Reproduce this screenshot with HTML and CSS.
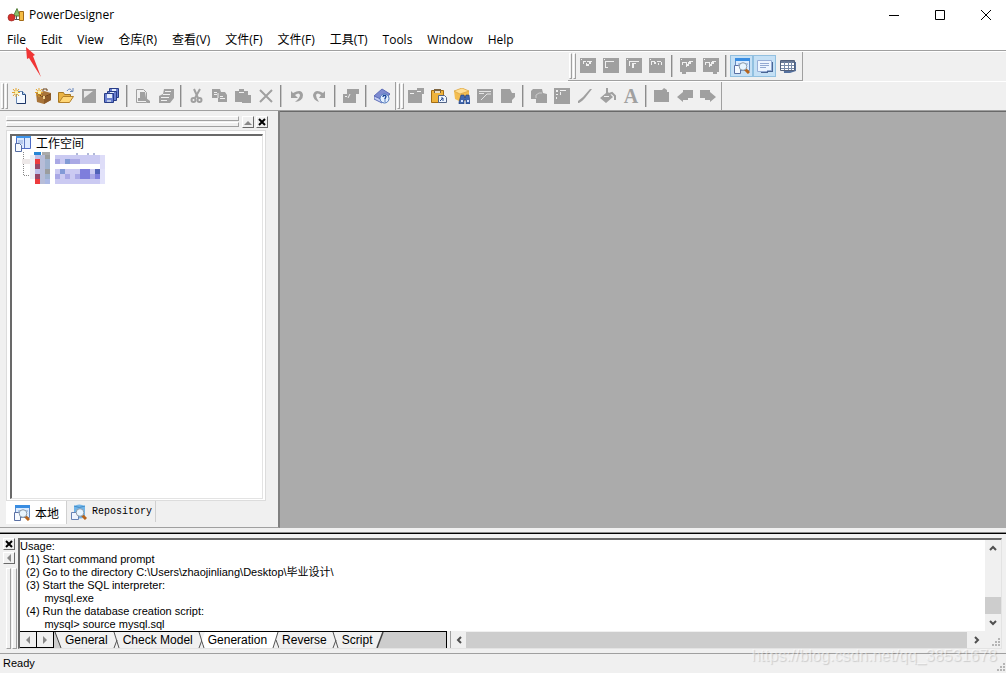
FILE: index.html
```html
<!DOCTYPE html>
<html lang="zh-CN">
<head>
  <meta charset="UTF-8" />
  <meta name="viewport" content="width=device-width, initial-scale=1" />
  <title>PowerDesigner</title>
  <link rel="stylesheet" href="styles.css">
</head>
<body>

  <header class="titlebar">
    <svg class="logo" width="18" height="16" viewBox="0 0 18 16">
      <path d="M6.500 9l3.500-7.500L13 9z" fill="#8cc06a" stroke="#56803c"/>
      <path d="M12.500 4.500h4v9h-4z" fill="#f5bd45" stroke="#a36a17"/>
      <path d="M9.500 9v3M8 12.500h4" stroke="#555" fill="none"/>
      <circle cx="4.500" cy="10.500" r="3.500" fill="#d8322c" stroke="#8c1e1a" stroke-width=".6"/>
    </svg>
    <span class="app-name">PowerDesigner</span>
    <div class="window-buttons">
      <button type="button" aria-label="Minimize"><svg width="12" height="12"><path d="M1 6.500h10" stroke="#000"/></svg></button>
      <button type="button" aria-label="Maximize"><svg width="12" height="12"><path d="M1.500 1.500h9v9h-9z" stroke="#000" fill="none"/></svg></button>
      <button type="button" aria-label="Close"><svg width="12" height="12"><path d="M1 1l10 10M11 1L1 11" stroke="#000"/></svg></button>
    </div>
  </header>

  <nav class="menubar">
    <a href="#">File</a>
    <a href="#">Edit</a>
    <a href="#">View</a>
    <a href="#">仓库(R)</a>
    <a href="#">查看(V)</a>
    <a href="#">文件(F)</a>
    <a href="#">文件(F)</a>
    <a href="#">工具(T)</a>
    <a href="#">Tools</a>
    <a href="#">Window</a>
    <a href="#">Help</a>
  </nav>

  <div class="toolbars">
    <div class="toolbar-row">
      <div class="toolbar diagram-bar">
        <span class="grip"></span>
        <button type="button" aria-label="Diagram 1"><svg viewBox="0 0 16 16"><path class="off" d="M0 0h16v15H0z"/><path class="hole" d="M1 1h1v1H1zM3 3h3v1H3zM3 3h1v3H3zM7 3h5v1H7zM9 4h2v2H9zM7 6h2v2H7zM6 5h1v3H6z"/></svg></button>
        <button type="button" aria-label="Diagram 2"><svg viewBox="0 0 16 16"><path class="off" d="M0 0h16v15H0z"/><path class="hole" d="M1 1h1v1H1zM2 3h9v1H2zM2 4h1v6H2zM3 9h2v1H3z"/></svg></button>
        <button type="button" aria-label="Diagram 3"><svg viewBox="0 0 16 16"><path class="off" d="M0 0h16v15H0z"/><path class="hole" d="M1 1h1v1H1zM3 3h10v1H3zM3 4h1v4H3zM6 5h4v1H6zM6 5h2v5H6z"/></svg></button>
        <button type="button" aria-label="Diagram 4"><svg viewBox="0 0 16 16"><path class="off" d="M0 0h16v15H0z"/><path class="hole" d="M1 1h1v1H1zM2 3h4v1H2zM2 4h1v3H2zM5 4h2v2H5zM8 3h4v1H8zM9 5h1v2H9zM12 4h1v3h-1z"/></svg></button>
        <span class="sep"></span>
        <button type="button" aria-label="Check"><svg viewBox="0 0 16 16"><path class="off" d="M0 0h16v14H6v2H2v-2H0z"/><path class="hole" d="M1 1h1v1H1zM2 4h5v1H2zM2 5h1v2H2zM6 5h1v4H6zM9 3h4v1H9zM8 4h3v2H8zM7 6h2v2H7z"/></svg></button>
        <button type="button" aria-label="Find"><svg viewBox="0 0 16 16"><path class="off" d="M0 0h16v14h-2v2h-4v-2H0z"/><path class="hole" d="M1 1h1v1H1zM2 4h5v1H2zM2 5h1v2H2zM6 5h1v4H6zM9 3h4v1H9zM8 4h3v2H8zM7 6h2v2H7z"/></svg></button>
        <span class="sep"></span>
        <button type="button" class="pressed" aria-label="Browser" aria-pressed="true"><svg viewBox="0 0 16 16"><use href="#browser-icon"/></svg></button>
        <button type="button" class="pressed" aria-label="Output" aria-pressed="true"><svg viewBox="0 0 16 16"><path d="M3 4h13v10h-5v1H4z" fill="#4a6594"/><path d="M.500 2.500h14v10h-4l-1 1h-9z" fill="#eef5ff" stroke="#98aed6"/><path d="M3 5.500h9M3 7.500h9M3 9.500h6" stroke="#93a9d2"/></svg></button>
        <button type="button" aria-label="Result List"><svg viewBox="0 0 16 16"><path d="M3 4h13v9l-6 2H4z" fill="#55719f"/><path d="M.500 2.500h14v10H.500z" fill="#fff" stroke="#53617c"/><path d="M1 4h13" stroke="#697996" stroke-width="2"/><path d="M1 7.500h13M1 10.500h13M4.500 4v8M8.500 4v8M11.500 4v8" stroke="#788aa8"/></svg></button>
      </div>
    </div>

    <div class="toolbar-row">
      <div class="toolbar">
        <span class="grip"></span>
        <button type="button" aria-label="New Model"><svg viewBox="0 0 16 16"><path d="M4.500 3.500h6l3 3v9h-9z" fill="#f4f9ff" stroke="#6a8ab5"/><path d="M5 15.500h8.500V7" fill="none" stroke="#1d3566"/><path d="M10.500 3.500v3h3" fill="#b9d3ef" stroke="#31578d"/><use href="#spark"/></svg></button>
        <button type="button" aria-label="New Project"><svg viewBox="0 0 16 16"><path d="M1 5l8-2 7 2v7l-7 4-7-2z" fill="#a87439"/><path d="M2 6l7 3 7-3" stroke="#694019" fill="none"/><path d="M9 10v6l7-4V6z" fill="#8c5a28"/><path d="M8 3V1h4v2" fill="none" stroke="#694019"/><path d="M8 8h2v3H8z" fill="#f0d08c"/><use href="#spark"/></svg></button>
        <button type="button" aria-label="Open"><svg viewBox="0 0 16 16"><path d="M.500 14.500v-10h5l1 2h6v3" fill="#eab344" stroke="#a77720"/><path d="M1 14.500l4-6h10.500l-4 6z" fill="#ffd675" stroke="#b5812a"/><path d="M9 3c2-3 4-2 5 0M12 3.500h3V0" fill="none" stroke="#6684ba"/></svg></button>
        <button type="button" aria-label="Save"><svg viewBox="0 0 16 16"><path class="off" d="M1 1h14v14H1z"/><path d="M3 3h9L3 10z" fill="#e8e8e8"/></svg></button>
        <button type="button" aria-label="Save All"><svg viewBox="0 0 16 16"><g fill="#6a7fd0" stroke="#273c87"><path d="M5.500 .500h9v9h-9z"/><path d="M3.500 3.500h9v9h-9z"/><path d="M.500 5.500h9v9h-9z"/></g><path d="M3 6h5v4H3zM8 1h4v2H8zM6 4h4v1H6z" fill="#e5edfc"/><path d="M3 12h4v2H3z" fill="#b9c8e7"/></svg></button>
        <span class="sep"></span>
        <button type="button" aria-label="Print Preview"><svg viewBox="0 0 16 16"><path d="M1.500 1.500h7l3 3v10h-10z" fill="none" stroke="#a0a0a0" stroke-width="1"/><path class="off" d="M5 4h5l1 6 4 3v2h-3l-1-2H3v-3h2z"/></svg></button>
        <button type="button" aria-label="Print"><svg viewBox="0 0 16 16"><path class="off" d="M6 1h10v9l-4 5H1V8l4-2z"/><path class="cut" d="M7 3.500h6M5 6.500h7M3 9.500h8M3 12.500h6"/></svg></button>
        <span class="sep"></span>
        <button type="button" aria-label="Cut"><svg viewBox="0 0 16 16"><path d="M5 1l4 9M11 1L6 10" stroke="#a0a0a0" stroke-width="2"/><g fill="none" stroke="#a0a0a0" stroke-width="2"><circle cx="4.500" cy="12" r="2"/><circle cx="10.500" cy="12" r="2"/></g></svg></button>
        <button type="button" aria-label="Copy"><svg viewBox="0 0 16 16"><path class="off" d="M0 1h8l1 3h4l2 3v7H6v-4H0z"/><path class="cut" d="M2 4.500h3M2 6.500h3M8 8.500h3M8 10.500h5M6 5v5"/></svg></button>
        <button type="button" aria-label="Paste"><svg viewBox="0 0 16 16"><path class="off" d="M0 3h4V1h5v2h4v4h3v8H7v-1H0z"/><path class="cut" d="M4 4.500h5"/></svg></button>
        <button type="button" aria-label="Delete"><svg viewBox="0 0 16 16"><path d="M2 2l12 12M14 2L2 14" stroke="#a0a0a0" stroke-width="2"/></svg></button>
        <span class="sep"></span>
        <button type="button" aria-label="Undo"><svg viewBox="0 0 16 16"><path class="off" d="M2 3v7h7L6 7q4-3 5 0 0 3-5 7 8-1 8-7Q13 0 4 5z"/></svg></button>
        <button type="button" aria-label="Redo"><svg viewBox="0 0 16 16"><path class="off" d="M13 3v7H7l2-3Q5 4 4 7q0 3 3 7-6-2-6-7Q3 0 11 5z"/></svg></button>
        <span class="sep"></span>
        <button type="button" aria-label="Properties"><svg viewBox="0 0 16 16"><path class="off" d="M4 1h12v5h-3v9H0V6h4z"/><path class="cut" d="M2 8.500h2M7 6l-2 4"/></svg></button>
        <span class="sep"></span>
        <button type="button" aria-label="Help"><svg viewBox="0 0 16 16"><path d="M0 8l8-7 8 5-7 7z" fill="#7d8bd1" stroke="#5f6db8"/><path d="M0 8v3l8 4 8-9-7 6z" fill="#c4d0f4" stroke="#5f6db8"/><circle cx="10.500" cy="10.500" r="4.500" fill="#e4f0ff" stroke="#4a75b9"/><path d="M9 9q0-2 2-1.500t0 3v1M11 12.500v1" fill="none" stroke="#174398" stroke-width="1.300"/></svg></button>
      </div>

      <div class="toolbar">
        <span class="grip"></span>
        <button type="button" aria-label="Find Objects"><svg viewBox="0 0 16 16"><path class="off" d="M0 2h9V0h7v6h-2v9H0z"/><path class="cut" d="M2 5.500h4M9 3.500h4"/></svg></button>
        <button type="button" aria-label="Paste Shortcut"><svg viewBox="0 0 16 16"><path d="M.500 2.500h12v12H.500z" fill="#efb33c" stroke="#a46d13"/><path d="M3 1h7v4H3z" fill="#7d643f"/><path d="M4 3h5v2H4z" fill="#e9ddc5"/><path d="M7.500 7.500h6l2 2v5h-8z" fill="#eef5ff" stroke="#536485"/><path d="M9 13l3-3h-2M12 10v3" fill="none" stroke="#254a8e"/></svg></button>
        <button type="button" aria-label="Find in Folder"><svg viewBox="0 0 16 16"><path d="M0 3l8-3 7 3v8l-8 3-6-3z" fill="#f3bd50"/><path d="M0 3l6 3 9-3-7-3z" fill="#ffdf94" stroke="#d39a38" stroke-width=".6"/><path d="M5 14l2-7h3l1 3 1-3h3l1 7v2h-4v-4h-2v4H5z" fill="#4268ae" stroke="#1d3976" stroke-width=".6"/><path d="M7 13h2M13 13h2" stroke="#d8e5ff" stroke-width="2"/></svg></button>
        <button type="button" aria-label="Symbol"><svg viewBox="0 0 16 16"><path class="off" d="M0 1h16v14H0z"/><path d="M2 3.500h12M2 5.500h5M4 12l6-6h4" stroke="#e4e4e4" fill="none"/></svg></button>
        <button type="button" aria-label="Note"><svg viewBox="0 0 16 16"><path class="off" d="M1 1h9l2 4h3v4l-3 3v3H1z"/></svg></button>
        <span class="sep"></span>
        <button type="button" aria-label="Group"><svg viewBox="0 0 16 16"><path class="off" d="M0 3l2-2h9l1 4 4 1v9H5v-4H0z"/><path d="M5 10V7l3-2h3" fill="none" stroke="#ccc"/></svg></button>
        <button type="button" aria-label="Ungroup"><svg viewBox="0 0 16 16"><path class="off" d="M0 0h16v16H0z"/><path class="hole" d="M2 2h2v2H2zM6 2h6v1H6zM2 6h2v1H2zM6 4h1v3H6zM2 9h1v2H2z"/></svg></button>
        <button type="button" aria-label="Line Style"><svg viewBox="0 0 16 16"><path class="off" d="M15 1L8 10l-3 3-3 2H1v-2l5-4 7-8z"/></svg></button>
        <button type="button" aria-label="Fill"><svg viewBox="0 0 16 16"><path class="off" d="M0 10l6-5V0h2v4l5 5-7 6z"/><path d="M9 6l3-1 3 3v4" fill="none" stroke="#a0a0a0" stroke-width="2"/><path class="cut" d="M4 8.500h5"/></svg></button>
        <button type="button" class="font-button" aria-label="Font">A</button>
        <span class="sep"></span>
        <button type="button" aria-label="Parent"><svg viewBox="0 0 16 16"><path class="off" d="M0 2h8l2-2 3 2v2h2v10H0z"/></svg></button>
        <button type="button" aria-label="Previous"><svg viewBox="0 0 16 16"><path class="off" d="M0 9l6-5V2h10v8h-5v2H6v2z"/></svg></button>
        <button type="button" aria-label="Next"><svg viewBox="0 0 16 16"><path class="off" d="M16 9l-6-5V2H0v8h5v2h5v2z"/></svg></button>
      </div>
    </div>
  </div>

  <main class="workspace">
    <aside class="browser">
      <div class="browser-head">
        <span class="rails"></span>
        <button type="button" class="mini" aria-label="Collapse"><svg width="8" height="8"><path d="M0 7l4-4 4 4z" fill="#888"/></svg></button>
        <button type="button" class="mini" aria-label="Close browser"><svg width="8" height="8"><path d="M1 1l6 6M7 1L1 7" stroke="#000" stroke-width="2"/></svg></button>
      </div>
      <div class="tree-frame">
        <div class="tree">
          <div class="tree-root">
            <svg width="18" height="18" viewBox="0 0 18 18"><path d="M2.500 1.500h14v12h-14z" fill="#dceaff" stroke="#4e6bc5"/><path d="M2 1h15v2H2z" fill="#3f95ea"/><path d="M4 6h5M4 8h5" stroke="#91abd9"/><path d="M10.500 3v10" stroke="#5b77c0"/><path d="M1.500 8.500h4l2 2v6h-6z" fill="#f7faff" stroke="#556da3"/></svg>
            <span>工作空间</span>
          </div>
          <!-- masked model nodes -->
          <svg class="masked" width="100" height="34" viewBox="0 0 100 34">
            <path d="M9.500 0v24M10 23.500h9" stroke="#888" stroke-dasharray="1 1" fill="none"/>
            <path d="M20 0h7v3h-7z" fill="#2685d5"/><path d="M28 0h8v4h-8z" fill="#aaa"/>
            <path d="M8 7h12v5H8z" fill="#ede8e8"/><path d="M16 3h5v24h-5z" fill="#eeeef4"/>
            <path d="M21 3h5v29h-5z" fill="#ed3b3e"/><path d="M21 12h5v5h-5zM21 22h5v5h-5z" fill="#964768"/><path d="M21 17h5v5h-5zM21 3h5v4h-5z" fill="#bdbee9"/>
            <path d="M26 3h5v29h-5z" fill="#b7bdd8"/><path d="M31 3h5v29h-5z" fill="#9fb2ce"/><path d="M31 3h5v4h-5zM31 17h5v5h-5z" fill="#9b9d9d"/><path d="M31 27h5v5h-5z" fill="#acb9e4"/>
            <path d="M41 3h50v9H41z" fill="#cacaf2"/><path d="M41 7h5v5h-5zM56 7h5v5h-5zM61 7h5v5h-5z" fill="#aaa9e5"/><path d="M51 7h5v5h-5z" fill="#819bd5"/><path d="M86 3h5v14h-5z" fill="#deddf8"/>
            <path d="M62 2h2M73 2h2M79 2h2" stroke="#6372b0"/>
            <path d="M41 17h50v15H41z" fill="#cbcaf2"/><path d="M41 22h5v5h-5zM51 22h5v5h-5zM61 22h5v5h-5zM76 22h5v5h-5z" fill="#a9a8e6"/><path d="M66 17h10v10H66z" fill="#7e7edc"/><path d="M46 17h5v5h-5z" fill="#829ad7"/><path d="M81 17h5v5h-5z" fill="#5163b7"/><path d="M81 22h5v5h-5z" fill="#7e7edc"/><path d="M86 17h5v15h-5z" fill="#e2e2fa"/>
          </svg>
        </div>
      </div>
      <div class="browser-tabs">
        <button type="button" class="active"><svg width="16" height="16" viewBox="0 0 16 16"><use href="#browser-icon"/></svg><span>本地</span></button>
        <button type="button" class="repo"><svg width="16" height="16" viewBox="0 0 16 16"><path d="M3 2q5-3 11 0v11q-5 3-11 0z" fill="#71b4e8"/><path d="M3 2q5 3 11 0" stroke="#408cc9" fill="none"/><path d="M.500 8.500h5l2 2v5h-7z" fill="#eef4ff" stroke="#6682b5"/><use href="#lens"/></svg><span>Repository</span></button>
      </div>
    </aside>
    <section class="mdi" aria-label="Diagram area"></section>
  </main>

  <section class="output">
    <div class="output-side">
      <button type="button" class="mini" aria-label="Close output"><svg width="8" height="8"><path d="M1 1l6 6M7 1L1 7" stroke="#000" stroke-width="2"/></svg></button>
      <button type="button" class="mini" aria-label="Collapse output"><svg width="8" height="8"><path d="M6 0v8L2 4z" fill="#888"/></svg></button>
      <span class="side-rails"></span>
    </div>
    <div class="output-box">
      <div class="output-main">
<pre class="log">Usage:
  (1) Start command prompt
  (2) Go to the directory C:\Users\zhaojinliang\Desktop\毕业设计\
  (3) Start the SQL interpreter:
        mysql.exe
  (4) Run the database creation script:
        mysql&gt; source mysql.sql</pre>
        <div class="vscroll">
          <svg width="8" height="8"><use href="#chevron"/></svg>
          <span class="vthumb"></span>
          <svg class="down" width="8" height="8"><use href="#chevron"/></svg>
        </div>
      </div>
      <div class="output-foot">
        <div class="sheet-tabs">
          <button type="button" class="step" aria-label="Previous tab"><svg width="8" height="8"><path d="M6 0v8L2 4z" fill="#888"/></svg></button>
          <button type="button" class="step" aria-label="Next tab"><svg width="8" height="8"><path d="M2 0v8l4-4z" fill="#888"/></svg></button>
          <svg class="slant" viewBox="0 0 8 16"><path d="M1 0h7v16H7z" fill="#f0f0f0"/><path d="M1 0l6 16" stroke="#444"/></svg>
          <button type="button" class="sheet">General</button>
          <svg class="slant" viewBox="0 0 8 16"><use href="#sheet-edge"/></svg>
          <button type="button" class="sheet">Check Model</button>
          <svg class="slant" viewBox="0 0 8 16"><use href="#sheet-edge"/><path d="M5 8l3-8v16z" fill="#fff"/></svg>
          <button type="button" class="sheet current">Generation</button>
          <svg class="slant" viewBox="0 0 8 16"><path d="M0 0h8v16H0z" fill="#f0f0f0"/><path d="M0 0h7L2 16H0z" fill="#fff"/><path d="M7 0L2 16M5 8l3 8" stroke="#555" fill="none"/></svg>
          <button type="button" class="sheet">Reverse</button>
          <svg class="slant" viewBox="0 0 8 16"><use href="#sheet-edge"/></svg>
          <button type="button" class="sheet">Script</button>
          <svg class="slant" viewBox="0 0 8 16"><path d="M0 0h7L1 16H0z" fill="#f0f0f0"/><path d="M7 0L1 16" stroke="#444" stroke-width="1.500"/></svg>
        </div>
        <div class="hscroll">
          <svg class="left" width="8" height="8"><use href="#chevron"/></svg>
          <span class="hthumb"></span>
          <svg class="right" width="8" height="8"><use href="#chevron"/></svg>
        </div>
        <svg class="size-grip" width="10" height="10"><use href="#dots"/></svg>
      </div>
    </div>
  </section>

  <footer class="statusbar">
    <span>Ready</span>
    <svg class="size-grip" width="10" height="10"><use href="#dots"/></svg>
  </footer>

  <svg class="pointer" width="18" height="32" viewBox="0 0 18 32"><path d="M1 1l9 8-2 1 8 21L4 12l-2 1z" fill="#f03535"/></svg>
  <div class="watermark">https://blog.csdn.net/qq_38531678</div>

  <svg class="defs" width="0" height="0">
    <defs>
      <g id="spark"><path d="M4 0v9M0 4.500h8M1 1l6 7M7 1L1 8" stroke="#e0a32c"/><path d="M3 3h3v3H3z" fill="#fff2a2"/></g>
      <g id="lens"><path d="M11 11l4 4" stroke="#b7641d" stroke-width="3"/><circle cx="9" cy="8.500" r="3.800" fill="#e8f5ff" stroke="#8e9caa"/></g>
      <g id="browser-icon"><path d="M1.500 1.500h14v11h-14z" fill="#dcecff" stroke="#668cc1"/><path d="M1 0h15v3H1z" fill="#398de2"/><path d="M4 6h3M11 6h3" stroke="#7ea2d3"/><path d="M.500 7.500h4l2 2v6h-6z" fill="#f6faff" stroke="#5a70a4"/><use href="#lens"/></g>
      <path id="chevron" d="M1 6l3-3 3 3" fill="none" stroke="#505050" stroke-width="2"/>
      <g id="sheet-edge"><path d="M0 0h8v16H0z" fill="#f0f0f0"/><path d="M2 0l5 16M5 8L2 16" stroke="#555" fill="none"/></g>
      <path id="dots" d="M7 0h2v2H7zM4 3h2v2H4zM7 3h2v2H7zM1 6h2v2H1zM4 6h2v2H4zM7 6h2v2H7z" fill="#b5b5b5"/>
    </defs>
  </svg>

</body>
</html>
```
FILE: styles.css
```css
* {
  box-sizing: border-box;
}

body {
  margin: 0;
  height: 100vh;
  display: flex;
  flex-direction: column;
  overflow: hidden;
  position: relative;
  background: #f0f0f0;
  color: #000;
  font-family: "Liberation Sans", "Noto Sans CJK SC", sans-serif;
  font-size: 12px;
}

button {
  margin: 0;
  padding: 0;
  border: 0;
  background: none;
  color: inherit;
  font: inherit;
}

svg {
  display: block;
  flex: none;
}

.defs {
  position: absolute;
}

/* title and menu */
.titlebar {
  display: flex;
  align-items: center;
  height: 29px;
  padding-left: 7px;
  background: #fff;
  font-family: "Open Sans", sans-serif;
}

.app-name {
  margin-left: 4px;
}

.window-buttons {
  display: flex;
  margin-left: auto;
}

.window-buttons button {
  width: 46px;
  height: 29px;
  padding-left: 20px;
}

.menubar {
  display: flex;
  align-items: center;
  gap: 15px;
  height: 21px;
  padding-left: 7px;
  background: #fff;
  font-family: "Open Sans", "Noto Sans CJK SC", sans-serif;
  line-height: 20px;
}

.menubar a {
  color: #000;
  text-decoration: none;
  white-space: nowrap;
}

/* toolbars */
.toolbars {
  border-top: 1px solid #a0a0a0;
}

.toolbar-row {
  display: flex;
  height: 30px;
  border-top: 1px solid #fff;
}

.toolbar-row + .toolbar-row {
  height: 29px;
}

.toolbar {
  display: flex;
  align-items: center;
  padding-right: 2px;
  border-right: 1px solid #a0a0a0;
}

.diagram-bar {
  margin-left: 568px;
  padding-right: 3px;
  border-bottom: 1px solid #a0a0a0;
}

.toolbar button {
  width: 23px;
  height: 22px;
  padding: 0 3px 0 4px;
}

.toolbar button svg {
  width: 16px;
  height: 16px;
}

.toolbar .pressed {
  background: #c5e0f5;
  border: 1px solid #92c0e0;
  padding: 0 2px 0 3px;
}

.toolbar .font-button {
  color: #a0a0a0;
  font: bold 20px/22px "Liberation Serif", serif;
}

.off {
  fill: #a0a0a0;
}

.hole {
  fill: #f0f0f0;
}

.cut {
  fill: none;
  stroke: #f0f0f0;
}

.grip {
  width: 8px;
  height: 26px;
  padding-left: 1px;
  display: flex;
  gap: 1px;
}

.grip::before,
.grip::after {
  content: "";
  width: 3px;
  border: 1px solid #a0a0a0;
  border-left-color: #fff;
  border-top-color: #fff;
}

.sep {
  width: 2px;
  height: 22px;
  margin: 0 3px;
  background: #8c8c8c;
  border-right: 1px solid #c8c8c8;
}

/* browser */
.workspace {
  flex: 1;
  min-height: 0;
  display: flex;
  border-top: 1px solid #a0a0a0;
}

.browser {
  width: 280px;
  padding: 4px 12px 3px 6px;
  display: flex;
  flex-direction: column;
  border-right: 2px solid #808080;
  border-bottom: 1px solid #a0a0a0;
}

.browser-head {
  display: flex;
  align-items: center;
  gap: 2px;
  height: 13px;
  margin-right: -2px;
}

.rails {
  flex: 1;
  display: flex;
  flex-direction: column;
  gap: 1px;
  margin-right: 1px;
}

.rails::before,
.rails::after {
  content: "";
  height: 3px;
  border: 1px solid #a0a0a0;
  border-left-color: #fff;
  border-top-color: #fff;
}

.mini {
  width: 12px;
  height: 12px;
  display: flex;
  align-items: center;
  justify-content: center;
  flex: none;
  border: 1px solid #696969;
  border-left-color: #fff;
  border-top-color: #fff;
}

.tree-frame {
  flex: 1;
  min-height: 0;
  margin-top: 2px;
  padding: 3px 2px 1px 3px;
  border: 1px solid #dcdcdc;
  background: #fff;
}

.tree {
  height: 100%;
  border: 1px solid #e3e3e3;
  border-left: 2px solid #696969;
  border-top: 2px solid #696969;
  padding-left: 2px;
}

.tree-root {
  display: flex;
  align-items: center;
  gap: 4px;
  height: 16px;
  line-height: 16px;
}

.browser-tabs {
  display: flex;
  height: 23px;
  align-items: flex-start;
}

.browser-tabs button {
  display: flex;
  align-items: center;
  gap: 5px;
  height: 21px;
  padding: 0 3px 0 4px;
  border-right: 1px solid #d0d0d0;
}

.browser-tabs .active {
  height: 23px;
  padding: 0 7px 0 8px;
  background: #fff;
}

.browser-tabs .repo {
  font-family: "Liberation Mono", monospace;
  font-size: 10px;
}

.mdi {
  flex: 1;
  background: #ababab;
  border-top: 1px solid #696969;
}

/* output */
.output {
  display: flex;
  height: 120px;
  margin-top: 5px;
  padding: 4px 4px 4px 3px;
  border-top: 1px solid #000;
  box-shadow: 0 -1px #888;
}

.output-side {
  width: 15px;
  display: flex;
  flex-direction: column;
  gap: 2px;
}

.side-rails {
  flex: 1;
  display: flex;
  gap: 1px;
  margin-left: 3px;
  margin-top: 2px;
}

.side-rails::before,
.side-rails::after {
  content: "";
  width: 3px;
  border: 1px solid #a0a0a0;
  border-left-color: #fff;
  border-top-color: #fff;
}

.output-box {
  flex: 1;
  min-width: 0;
  display: flex;
  flex-direction: column;
  background: #fff;
  border: 1px solid #e3e3e3;
  border-left: 2px solid #696969;
  border-top: 2px solid #696969;
}

.output-main {
  flex: 1;
  min-height: 0;
  display: flex;
}

.log {
  flex: 1;
  margin: 0;
  font: 11px/13px "Liberation Sans", "Noto Sans CJK SC", sans-serif;
}

.vscroll {
  width: 16px;
  padding: 4px 0;
  display: flex;
  flex-direction: column;
  align-items: center;
  background: #f0f0f0;
}

.vthumb {
  width: 16px;
  height: 17px;
  margin: auto 0 5px;
  background: #cdcdcd;
}

.down {
  transform: rotate(180deg);
}

.output-foot {
  display: flex;
  height: 17px;
  background: #f0f0f0;
}

.sheet-tabs {
  width: 427px;
  display: flex;
  overflow: hidden;
  background: #cdcdcd;
  border-top: 1px solid #000;
  border-right: 1px solid #000;
}

.step {
  width: 17px;
  height: 16px;
  padding-left: 4px;
  background: #f0f0f0;
  border-right: 1px solid #000;
  border-bottom: 1px solid #000;
}

.slant {
  width: 8px;
  height: 16px;
}

.sheet {
  padding: 0 4px 0 3px;
  background: #f0f0f0;
  line-height: 14px;
  white-space: nowrap;
}

.current {
  background: #fff;
}

.hscroll {
  flex: 1;
  display: flex;
  align-items: center;
  margin-left: 3px;
  padding: 0 4px;
  border-left: 1px solid #a0a0a0;
}

.hthumb {
  flex: 1;
  height: 16px;
  margin: 0 6px 0 3px;
  background: #cdcdcd;
}

.left {
  transform: rotate(-90deg);
}

.right {
  transform: rotate(90deg);
}

.size-grip {
  align-self: flex-end;
  margin-left: 6px;
}

/* status */
.statusbar {
  display: flex;
  align-items: center;
  justify-content: space-between;
  height: 20px;
  padding-left: 3px;
  border-top: 1px solid #a0a0a0;
  font-size: 11px;
  line-height: 21px;
}

/* overlays */
.pointer {
  position: absolute;
  left: 25px;
  top: 46px;
}

.watermark {
  position: absolute;
  right: 9px;
  bottom: 7px;
  color: rgba(255, 255, 255, 0.5);
  font-size: 16px;
  line-height: 20px;
  text-shadow: 1px 1px 1px rgba(0, 0, 0, 0.15);
}
```
